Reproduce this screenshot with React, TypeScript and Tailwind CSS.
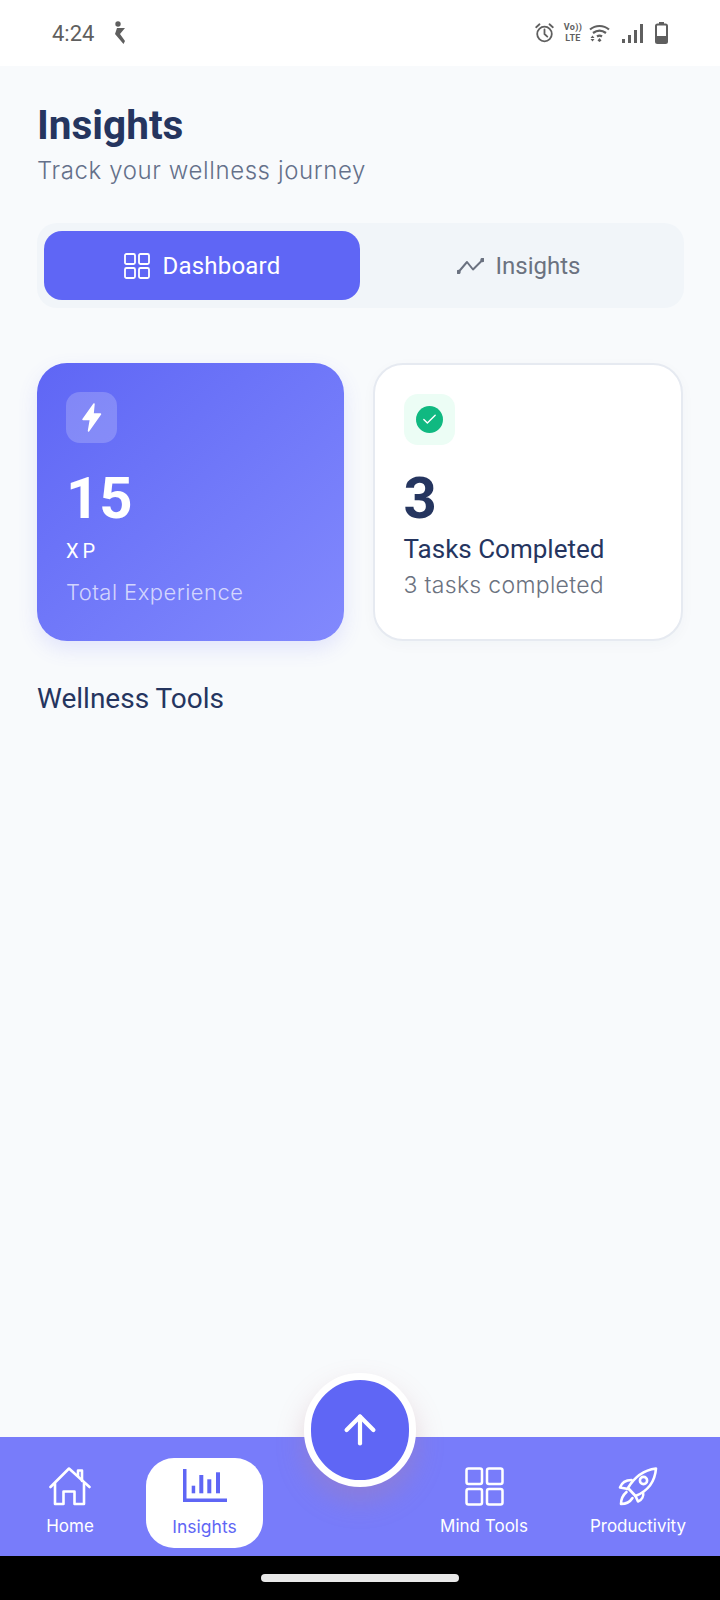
import React from "react";
import { ArrowUp, Check } from "lucide-react";

const roboto = "font-['Roboto',sans-serif]";
const poppins = "font-['Inter',sans-serif]";

const StatusIcons = () => (
  <div className="flex items-center text-[#5f5f5f]">
    <svg width="19" height="20" viewBox="0 0 19 20" fill="none" stroke="currentColor" strokeWidth="1.800" className="mr-[10px]">
      <circle cx="9.500" cy="11" r="7.300" />
      <path d="M9.500 6.500V11l2.800 2.600M1.200 4.200 4.500 1.300M17.800 4.200 14.500 1.300" strokeLinecap="round" />
    </svg>
    <div className={`${roboto} mr-[7px] flex w-[18px] flex-col items-center text-[9px] leading-[11px] font-bold tracking-[0.3px]`}>
      <span>Vo))</span>
      <span>LTE</span>
    </div>
    <svg width="21" height="18" viewBox="0 0 21 18" fill="none" stroke="currentColor" strokeWidth="2.200" className="mr-[12px]">
      <path d="M1 5.500C6.500 0.800 14.500 0.800 20 5.500M4 9C8 6 13 6 17 9M8 12.500C9.500 11.500 11.500 11.500 13 12.500" />
      <path d="M3.500 11.500 5.500 14H1.500ZM5.500 15 3.500 17.500 1.500 15ZM10.500 14 12.500 16.500 10.500 18 8.500 16.500Z" fill="currentColor" stroke="none" />
    </svg>
    <div className="mr-[12px] flex h-[19px] items-end gap-[3px]">
      <div className="h-[4px] w-[3px] bg-[#5f5f5f]" />
      <div className="h-[8px] w-[3px] bg-[#5f5f5f]" />
      <div className="h-[13px] w-[3px] bg-[#5f5f5f]" />
      <div className="h-[19px] w-[3px] bg-[#5f5f5f]" />
    </div>
    <svg width="13" height="22" viewBox="0 0 13 22" fill="none">
      <path d="M4 0h5v2H4Z" fill="#5f5f5f" />
      <rect x="1" y="2.500" width="11" height="18.500" rx="1.500" stroke="#5f5f5f" strokeWidth="2" />
      <rect x="1" y="14" width="11" height="7" rx="1.200" fill="#5f5f5f" />
    </svg>
  </div>
);

const TabGridIcon = () => (
  <svg width="26" height="26" viewBox="0 0 26 26" fill="none" stroke="white" strokeWidth="1.800">
    <rect x="1" y="1" width="10" height="10" rx="1.500" />
    <rect x="15" y="1" width="10" height="10" rx="1.500" />
    <rect x="1" y="15" width="10" height="10" rx="1.500" />
    <rect x="15" y="15" width="10" height="10" rx="1.500" />
  </svg>
);

const TrendIcon = () => (
  <svg width="27" height="16" viewBox="0 0 27 16" fill="none" stroke="#6b7280" strokeWidth="2" strokeLinecap="round" strokeLinejoin="round">
    <path d="M1.500 14 10 4l6 7.500L25.500 2" />
    <circle cx="1.500" cy="14" r="1.200" fill="#6b7280" />
    <circle cx="25.500" cy="2" r="1.200" fill="#6b7280" />
  </svg>
);

const HomeIcon = () => (
  <svg width="42" height="39" viewBox="0 0 42 39" fill="none" stroke="white" strokeWidth="2.600" strokeLinecap="round" strokeLinejoin="round">
    <path d="M1.500 20 20 1.500 40.500 20" />
    <path d="M6 16.500V37h8.500V24.500h11V37H35V16.500" />
    <path d="M29 9V3.500h4V14" />
  </svg>
);

const BarsIcon = () => (
  <svg width="44" height="33" viewBox="0 0 44 33" fill="none">
    <path d="M1.750 0v31.250H44" stroke="#5f66f5" strokeWidth="3.500" />
    <rect x="8.700" y="16.700" width="3.500" height="7.600" fill="#5f66f5" />
    <rect x="16.300" y="6" width="4" height="18.300" fill="#5f66f5" />
    <rect x="24.300" y="10.300" width="4" height="14" fill="#5f66f5" />
    <rect x="33" y="3.300" width="4" height="21" fill="#5f66f5" />
  </svg>
);

const GridIcon = () => (
  <svg width="39" height="39" viewBox="0 0 39 39" fill="none" stroke="white" strokeWidth="2.500">
    <rect x="1.500" y="1.500" width="15.500" height="15.500" rx="2" />
    <rect x="22" y="1.500" width="15.500" height="15.500" rx="2" />
    <rect x="1.500" y="22" width="15.500" height="15.500" rx="2" />
    <rect x="22" y="22" width="15.500" height="15.500" rx="2" />
  </svg>
);

const RocketIcon = () => (
  <svg width="40" height="39" viewBox="0 0 40 39" fill="none" stroke="white" strokeWidth="2.600" strokeLinecap="round" strokeLinejoin="round">
    <path d="M38 1.500C27 3 17 9 10 21l7.500 8C30 24 37 14 38 1.500Z" />
    <circle cx="25.500" cy="13.500" r="3.600" />
    <path d="M13.500 13C9 13 4 15 2 20.500l8 1.500" />
    <path d="M25 25c1 4-1 8-5 9.500l-2.500-5.500" />
    <path d="M8.500 25C5 28 3 32 3 37c5 0 9-2 11.500-6" />
  </svg>
);

const NavItem = ({ label, icon, className }: { label: string; icon: React.ReactNode; className?: string }) => (
  <div className={`flex w-[120px] flex-col items-center pt-[9px] ${className ?? ""}`}>
    <div className="flex h-[39px] items-center justify-center">{icon}</div>
    <span className={`${poppins} mt-[8px] text-[17px] leading-[24px] text-white`}>{label}</span>
  </div>
);

export default function App() {
  return (
    <div className="relative flex h-[1600px] w-[720px] flex-col overflow-hidden bg-[#f8fafc]">
      <div className="flex h-[66px] items-center justify-between bg-white pr-[52px] pl-[52px]">
        <div className="flex items-center gap-[19px]">
          <span className={`${roboto} text-[22px] text-[#5f5f5f]`}>4:24</span>
          <svg width="13" height="24" viewBox="0 0 13 24" fill="#5f5f5f">
            <circle cx="5" cy="3" r="2.700" />
            <path d="M4 7h8L7 13l5 7-1.500 3L2 13Z" />
          </svg>
        </div>
        <StatusIcons />
      </div>

      <div className="flex flex-1 flex-col px-[37px]">
        <h1 className={`${roboto} mt-[36px] text-[40.500px] leading-[46px] font-bold text-[#25355f]`}>Insights</h1>
        <p className={`${poppins} mt-[6px] text-[24px] leading-[34px] font-light tracking-[0.6px] text-[#64708a]`}>Track your wellness journey</p>

        <div className="mt-[35px] flex h-[85px] w-[647px] items-center rounded-[20px] bg-[#f1f5f9] px-[7px]">
          <div className="flex h-[69px] w-[316px] items-center justify-center gap-[13px] rounded-[18px] bg-[#5f66f5]">
            <TabGridIcon />
            <span className={`${roboto} pt-[1px] text-[24px] tracking-[0.2px] text-white`}>Dashboard</span>
          </div>
          <div className="flex flex-1 items-center justify-center gap-[12px]">
            <TrendIcon />
            <span className={`${roboto} pt-[1px] text-[24px] text-[#6b7280]`}>Insights</span>
          </div>
        </div>

        <div className="mt-[55px] flex gap-[29px]">
          <div className="h-[278px] w-[307px] rounded-[30px] bg-gradient-to-br from-[#5f66f5] to-[#8289fd] pt-[29px] pl-[29px] shadow-[0_8px_20px_rgba(95,102,245,0.14)]">
            <div className="flex h-[51px] w-[51px] items-center justify-center rounded-[14px] bg-white/20">
              <svg width="21" height="29" viewBox="0 0 21 29" fill="white" stroke="white" strokeWidth="1.500" strokeLinejoin="round">
                <path d="M13 1 2 16.500h7.500L7.500 28 19.500 11H12Z" />
              </svg>
            </div>
            <div className={`${roboto} mt-[23px] text-[58px] leading-[64px] font-bold text-white`}>15</div>
            <div className={`${roboto} mt-[7px] text-[20px] leading-[28px] tracking-[4px] text-white`}>XP</div>
            <div className={`${poppins} mt-[12px] text-[22px] leading-[30px] font-light tracking-[0.45px] text-white/70`}>Total Experience</div>
          </div>
          <div className="h-[278px] w-[311px] rounded-[30px] border-2 border-[#e6eaf1] bg-white pt-[29px] pl-[29px] shadow-[0_4px_14px_rgba(40,50,90,0.03)]">
            <div className="flex h-[51px] w-[51px] items-center justify-center rounded-[14px] bg-[#ecfdf5]">
              <div className="flex h-[27px] w-[27px] items-center justify-center rounded-full bg-[#10b981]">
                <Check size={17} strokeWidth={2} className="text-white" />
              </div>
            </div>
            <div className={`${roboto} mt-[21px] text-[58px] leading-[64px] font-bold text-[#25355f]`}>3</div>
            <div className={`${roboto} mt-[3px] text-[26px] leading-[32px] text-[#25355f]`}>Tasks Completed</div>
            <div className={`${poppins} mt-[4px] text-[23px] leading-[32px] font-light tracking-[0.3px] text-[#6b7280]`}>3 tasks completed</div>
          </div>
        </div>

        <h2 className={`${roboto} mt-[40px] text-[28px] leading-[36px] text-[#25355f]`}>Wellness Tools</h2>
      </div>

      <div className="flex h-[119px] items-start bg-[#787cfa] pt-[21px] pl-[10px]">
        <NavItem label="Home" icon={<HomeIcon />} />
        <div className="ml-[16px] flex h-[90px] w-[117px] flex-col items-center rounded-[28px] bg-white pt-[11px]">
          <BarsIcon />
          <span className={`${poppins} mt-[13px] text-[17.500px] leading-[24px] text-[#5f66f5]`}>Insights</span>
        </div>
        <NavItem label="Mind Tools" icon={<GridIcon />} className="ml-[161px]" />
        <NavItem label="Productivity" icon={<RocketIcon />} className="ml-[34px]" />
      </div>

      <div className="flex h-[44px] items-start justify-center bg-black pt-[18px]">
        <div className="h-[8px] w-[198px] rounded-full bg-[#e8e8e8]" />
      </div>

      <div className="absolute top-[1373px] left-[304px] flex h-[114px] w-[112px] items-center justify-center rounded-full border-[7px] border-white bg-[#5f66f5] shadow-[0_14px_28px_rgba(190,130,140,0.3)]">
        <ArrowUp size={46} strokeWidth={2.200} className="text-white" />
      </div>
    </div>
  );
}
